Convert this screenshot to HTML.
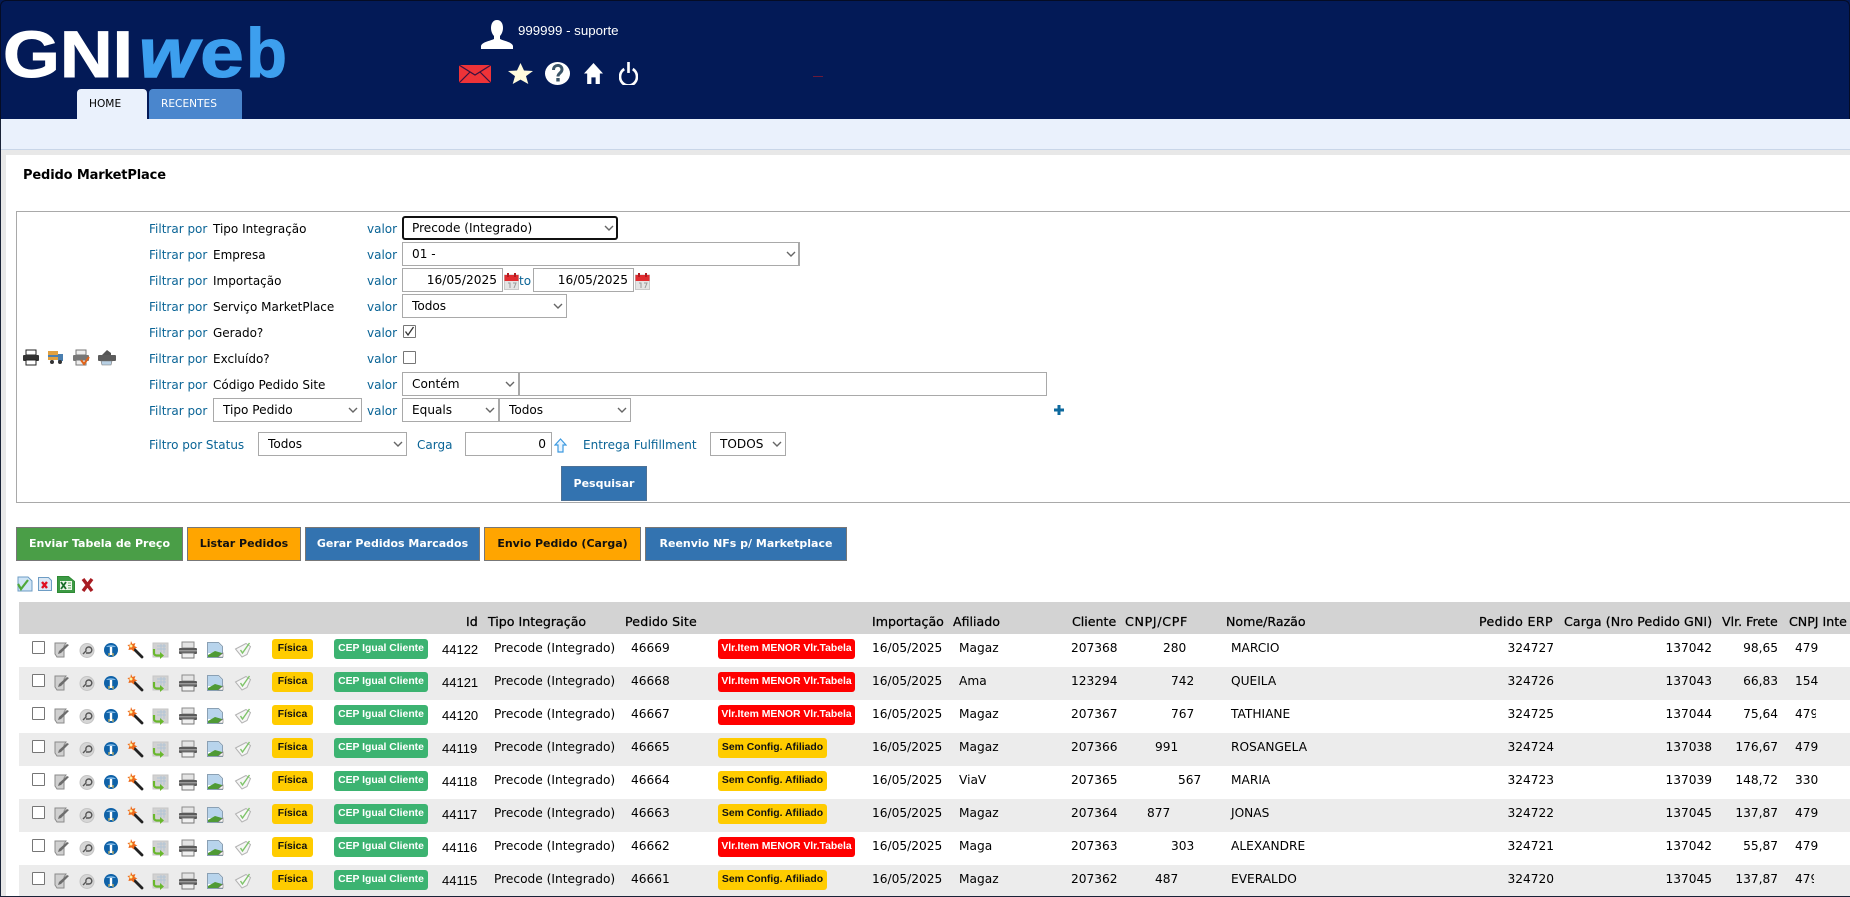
<!DOCTYPE html>
<html lang="pt-BR"><head><meta charset="utf-8"><title>Pedido MarketPlace</title>
<style>
html,body{margin:0;padding:0;width:1850px;height:897px;overflow:hidden;background:#fff}
*{box-sizing:border-box}
body{position:relative;font:12px/16px "DejaVu Sans","Liberation Sans",sans-serif;color:#000}
.a,.t,.l,.k,select,input,.b,.row,.c{position:absolute}
.t,.l,.k{white-space:nowrap;height:16px}
.l{color:#0a6496}
select,input[type=text]{appearance:none;-webkit-appearance:none;background:#fff;border:1px solid #a9a9a9;border-radius:0;font:12.1px "DejaVu Sans",sans-serif;color:#000;height:24px;padding:0 0 0 9px;margin:0;outline:0}
input.r{text-align:right;padding:0 5px 0 0;font-size:12.2px}
input[type=checkbox]{appearance:none;-webkit-appearance:none;background:#fff;border:1px solid #767676;border-radius:1px}
.chev{position:absolute;width:10px;height:6px;fill:none;stroke:#666;stroke-width:1.4}
.b{top:527px;height:34px;border:1px solid #777;font:bold 11px/32px "DejaVu Sans",sans-serif;text-align:center;white-space:nowrap;padding:0}
.g{background:#4a9e47;color:#fff}.o{background:#ffa500;color:#111}.bl{background:#3373b0;color:#fff}
.h{top:614px;font-size:12.6px;color:#000;-webkit-text-stroke:.25px #000}
.row{left:0;width:1850px;height:33px;font-size:12.2px}
.even{background:linear-gradient(90deg,transparent 19px,#ececec 19px)}
.row input{position:absolute;left:32px;top:7px;margin:0;width:13px;height:13px}
.ri{position:absolute;left:50px;top:6px;width:210px;height:20px}
.c{top:6px;white-space:nowrap;height:16px}
.c.n{font:13px/16px "Liberation Sans",sans-serif;left:442px;top:8px;color:#000}
.bd{position:absolute;top:5px;height:20px;border-radius:3px;font:bold 10.4px/20px "Liberation Sans",sans-serif;text-align:center;white-space:nowrap}
.fi{left:272px;width:41px;background:#ffcc00;color:#111}
.ce{left:334px;width:94px;background:#3cb371;color:#fff}
.vr{left:718px;width:137px;background:#f00;color:#fff}
.se{left:718px;width:109px;background:#ffcc00;color:#111}
.r2{text-align:right}
</style></head><body>

<svg width="0" height="0" style="position:absolute">
<symbol id="cal" viewBox="0 0 15 17">
<rect x="0.5" y="2" width="14" height="14.5" fill="#e4e4e4" stroke="#c8c8c8"/><rect x="0.5" y="2" width="14" height="6" fill="#e02c30"/><rect x="3" y="0" width="2" height="4" fill="#b01c20"/><rect x="10" y="0" width="2" height="4" fill="#b01c20"/><path d="M4 10h2v5M9 10h3l-2 5" stroke="#999" fill="none"/>
</symbol>
<symbol id="ri" viewBox="0 0 210 20">
<!-- edit -->
<path d="M5 3h11l-2 3v11H7L5 14z" fill="#d0d0d0" stroke="#8a8a8a"/><path d="M9 11l8-7 2 1-8 8-3 1z" fill="#6d6d6d"/>
<!-- circle -->
<circle cx="37" cy="10.500" r="7" fill="#d6d6d6" stroke="#c4c4c4"/><path d="M33 14l3-3a3 3 0 1 1 3 2h-3" fill="none" stroke="#555" stroke-width="1.400"/>
<!-- info -->
<circle cx="61" cy="10" r="7" fill="#0f62a8"/><path d="M56 7a6 4 0 0 1 10 0" fill="#7fb8e6"/><path d="M61 7v8" stroke="#fff" stroke-width="2.400"/><path d="M59 13v3M63 13v3" stroke="#f2c24a" stroke-width="1"/>
<!-- wand -->
<path d="M83 8l9 9" stroke="#222" stroke-width="2.800" stroke-linecap="round"/><path d="M81 1l1.400 3 3-1-1 3 3 1.500-3 1-.5 3-2.500-2-3 .5 1-3-2-2 3-.5z" fill="#ee6a1a"/><circle cx="81" cy="6" r="1.500" fill="#fff3a0"/>
<!-- refresh -->
<rect x="103" y="3" width="15" height="14" fill="#d2d2d2" stroke="#c6c6c6"/><path d="M107 6h9M107 9h9M111 4v9M114 4v9" stroke="#b2c4d6"/><path d="M104 9v4a2.500 2.500 0 0 0 2.500 2.500h4" stroke="#69b82c" stroke-width="2.200" fill="none"/><path d="M110 12v7l4-3.500z" fill="#69b82c"/>
<!-- printer -->
<rect x="132" y="2" width="12" height="6" fill="#e4e4e4" stroke="#8c8c8c"/><rect x="129" y="8" width="18" height="6" rx="1" fill="#5a5a5a"/><rect x="132" y="13" width="12" height="5" fill="#f0f0f0" stroke="#777"/><rect x="129" y="10" width="18" height="1.500" fill="#9a9a9a"/>
<!-- image -->
<path d="M157.500 2.500h11l4 4v11h-15z" fill="#fff" stroke="#8aa0b4"/><path d="M158 3h10l4 4v6h-14z" fill="#b8d4ec"/><path d="M158 17v-2l7-4 7 2v4z" fill="#4f9a35"/><path d="M168 17l5-4v4z" fill="#fff" stroke="#777" stroke-width=".6"/>
<!-- check -->
<path d="M185.500 9L196 3.500l4.500 3-3.500 8-5 2.500z" fill="#f6f6f6" stroke="#b4b4b4"/><path d="M190.500 10l2 3 7-10" fill="none" stroke="#7fc46a" stroke-width="1.400"/>
</symbol>
</svg>

<!-- header -->
<div class="a" style="left:0;top:0;width:1850px;height:119px;background:#031a57"></div>
<div class="a" style="left:0;top:0;width:1850px;height:119px;border:1px solid #050c24;border-bottom:0;border-radius:6px 6px 0 0"></div>
<svg class="a" style="left:0;top:20px" width="300" height="65">
<text x="3" y="57" font-family="Liberation Sans" font-weight="bold" font-size="66" fill="#fff" stroke="#fff" stroke-width="1" textLength="130" lengthAdjust="spacingAndGlyphs">GNI</text>
<text x="139" y="57" font-family="Liberation Sans" font-style="italic" font-weight="bold" font-size="70" fill="#3d9fee" stroke="#3d9fee" stroke-width="1.500" textLength="59" lengthAdjust="spacingAndGlyphs">w</text>
<text x="200" y="57" font-family="Liberation Sans" font-weight="bold" font-size="70" fill="#3d9fee" stroke="#3d9fee" stroke-width="1" textLength="44" lengthAdjust="spacingAndGlyphs">e</text>
<text x="246" y="57" font-family="Liberation Sans" font-weight="bold" font-size="70" fill="#3d9fee" stroke="#3d9fee" stroke-width="1" textLength="41" lengthAdjust="spacingAndGlyphs">b</text>
</svg>
<div class="a" style="left:77px;top:89px;width:70px;height:30px;background:#eaf1fc;border-radius:4px 4px 0 0"></div>
<div class="t" style="left:89px;top:96px;font-size:10.6px;color:#000">HOME</div>
<div class="a" style="left:149px;top:89px;width:93px;height:30px;background:#4a86cd;border-radius:4px 4px 0 0"></div>
<div class="t" style="left:161px;top:96px;font-size:10.6px;color:#fff">RECENTES</div>

<svg class="a" style="left:481px;top:20px" width="32" height="29" viewBox="0 0 32 29"><path d="M16 0c4 0 6 3.500 6 8 0 4-2 7-3 8v3c4 2 12 3 13 7v3H0v-3c1-4 9-5 13-7v-3c-1-1-3-4-3-8 0-4.500 2-8 6-8z" fill="#fff"/></svg>
<div class="t" style="left:518px;top:23px;font:13.300px/16px 'Liberation Sans',sans-serif;color:#fff">999999 - suporte</div>
<svg class="a" style="left:459px;top:65px" width="32" height="18" viewBox="0 0 32 18"><rect width="32" height="18" fill="#ee3338"/><path d="M0 0l16 10L32 0M0 18l11-11M32 18L21 7" fill="none" stroke="#3a1240" stroke-width="1.200"/></svg>
<svg class="a" style="left:508px;top:63px" width="25" height="21" viewBox="0 0 25 24" preserveAspectRatio="none"><path d="M12.500 0l3.500 8.500 9 .7-7 5.800 2.300 9-7.800-5-7.800 5 2.300-9-7-5.800 9-.7z" fill="#fffbdc"/></svg>
<svg class="a" style="left:545px;top:62px" width="25" height="23" viewBox="0 0 25 23"><ellipse cx="12.500" cy="11.500" rx="12.500" ry="11.500" fill="#fff"/><path d="M8.500 8c0-6 8.500-6 8.500-.5 0 3.500-4 3.500-4 7" fill="none" stroke="#3b5568" stroke-width="3"/><rect x="11.300" y="16" width="3.400" height="3.500" fill="#3b5568"/></svg>
<svg class="a" style="left:584px;top:63px" width="19" height="21" viewBox="0 0 18 19" preserveAspectRatio="none"><path d="M9 0l9 9.500h-3V19h-4v-6H7v6H3V9.500H0z" fill="#fff"/></svg>
<svg class="a" style="left:619px;top:62px" width="19" height="23" viewBox="0 0 18 21" preserveAspectRatio="none"><path d="M5 6.500a8 8 0 1 0 8 0" fill="none" stroke="#fff" stroke-width="2.500"/><path d="M9 0v10" stroke="#fff" stroke-width="2.500"/></svg>
<div class="a" style="left:813px;top:76px;width:10px;height:1px;background:#6b1a3a"></div>

<!-- sub band -->
<div class="a" style="left:0;top:119px;width:1850px;height:31px;background:#eaf1fc;border-bottom:1px solid #c9d6e8"></div>
<div class="a" style="left:0;top:150px;width:1850px;height:5px;background:#e8e8e8"></div>
<div class="a" style="left:0;top:150px;width:6px;height:747px;background:#e8e8e8"></div>

<div class="t" style="left:23px;top:168px;font:bold 13px/16px 'DejaVu Sans',sans-serif;color:#000;letter-spacing:-.15px">Pedido MarketPlace</div>

<!-- filter box -->
<div class="a" style="left:16px;top:211px;width:1840px;height:292px;border:1px solid #a9a9a9"></div>

<svg class="a" style="left:23px;top:349px" width="94" height="17" viewBox="0 0 94 17">
<rect x="3" y="1" width="10" height="5" fill="#fff" stroke="#222"/><rect x="0" y="6" width="16" height="6" rx="1" fill="#333"/><rect x="3" y="11" width="10" height="5" fill="#fff" stroke="#222"/>
<rect x="25" y="2" width="10" height="9" fill="#e0a040"/><rect x="25" y="6" width="10" height="2" fill="#4a7fb0"/><rect x="35" y="5" width="5" height="7" fill="#4a7fb0"/><circle cx="29" cy="13" r="2" fill="#333"/><circle cx="37" cy="13" r="2" fill="#333"/>
<rect x="53" y="1" width="10" height="5" fill="#eee" stroke="#777"/><rect x="50" y="6" width="16" height="6" rx="1" fill="#777"/><rect x="53" y="11" width="10" height="5" fill="#eee" stroke="#777"/><path d="M58 11l3 4 5-7" fill="none" stroke="#e0641a" stroke-width="2"/>
<path d="M78 7l6-6 4 3v3z" fill="#555"/><rect x="75" y="6" width="18" height="6" rx="1" fill="#5c5c5c"/><path d="M78 12h11l-1 4H79z" fill="#b8d0e4" stroke="#777" stroke-width=".6"/>
</svg>

<div class="l" style="left:149px;top:221px">Filtrar por</div><div class="t" style="left:213px;top:221px">Tipo Integração</div><div class="l" style="left:367px;top:221px">valor</div>
<select style="left:402px;top:216px;width:216px;border:2px solid #111;border-radius:3px;padding-left:8px"><option>Precode (Integrado)</option></select>
<svg class="chev" style="left:604px;top:225px"><path d="M1 1l4 4 4-4"/></svg>

<div class="l" style="left:149px;top:247px">Filtrar por</div><div class="t" style="left:213px;top:247px">Empresa</div><div class="l" style="left:367px;top:247px">valor</div>
<select style="left:402px;top:242px;width:398px;border-right-width:2px"><option>01 -</option></select>
<svg class="chev" style="left:786px;top:251px"><path d="M1 1l4 4 4-4"/></svg>

<div class="l" style="left:149px;top:273px">Filtrar por</div><div class="t" style="left:213px;top:273px">Importação</div><div class="l" style="left:367px;top:273px">valor</div>
<input class="r" type="text" value="16/05/2025" style="left:402px;top:268px;width:101px">
<svg class="a" style="left:504px;top:273px" width="15" height="17"><use href="#cal"/></svg>
<div class="l" style="left:519px;top:273px">to</div>
<input class="r" type="text" value="16/05/2025" style="left:533px;top:268px;width:101px">
<svg class="a" style="left:635px;top:273px" width="15" height="17"><use href="#cal"/></svg>

<div class="l" style="left:149px;top:299px">Filtrar por</div><div class="t" style="left:213px;top:299px">Serviço MarketPlace</div><div class="l" style="left:367px;top:299px">valor</div>
<select style="left:402px;top:294px;width:165px"><option>Todos</option></select>
<svg class="chev" style="left:553px;top:303px"><path d="M1 1l4 4 4-4"/></svg>

<div class="l" style="left:149px;top:325px">Filtrar por</div><div class="t" style="left:213px;top:325px">Gerado?</div><div class="l" style="left:367px;top:325px">valor</div>
<input type="checkbox" checked style="position:absolute;left:403px;top:325px;margin:0;width:13px;height:13px">
<svg class="a" style="left:403px;top:325px" width="13" height="13"><path d="M2.500 6.500l2.500 3.500 5.500-8" fill="none" stroke="#333" stroke-width="1.300"/></svg>

<div class="l" style="left:149px;top:351px">Filtrar por</div><div class="t" style="left:213px;top:351px">Excluído?</div><div class="l" style="left:367px;top:351px">valor</div>
<input type="checkbox" style="position:absolute;left:403px;top:351px;margin:0;width:13px;height:13px">

<div class="l" style="left:149px;top:377px">Filtrar por</div><div class="t" style="left:213px;top:377px">Código Pedido Site</div><div class="l" style="left:367px;top:377px">valor</div>
<select style="left:402px;top:372px;width:117px"><option>Contém</option></select>
<svg class="chev" style="left:505px;top:381px"><path d="M1 1l4 4 4-4"/></svg>
<input type="text" value="" style="left:519px;top:372px;width:528px">

<div class="l" style="left:149px;top:403px">Filtrar por</div>
<select style="left:213px;top:398px;width:149px"><option>Tipo Pedido</option></select>
<svg class="chev" style="left:348px;top:407px"><path d="M1 1l4 4 4-4"/></svg>
<div class="l" style="left:367px;top:403px">valor</div>
<select style="left:402px;top:398px;width:97px"><option>Equals</option></select>
<svg class="chev" style="left:485px;top:407px"><path d="M1 1l4 4 4-4"/></svg>
<select style="left:499px;top:398px;width:132px"><option>Todos</option></select>
<svg class="chev" style="left:617px;top:407px"><path d="M1 1l4 4 4-4"/></svg>
<svg class="a" style="left:1054px;top:405px" width="10" height="10"><path d="M5 0v10M0 5h10" stroke="#0e6a9e" stroke-width="3"/></svg>

<div class="l" style="left:149px;top:437px">Filtro por Status</div>
<select style="left:258px;top:432px;width:149px"><option>Todos</option></select>
<svg class="chev" style="left:393px;top:441px"><path d="M1 1l4 4 4-4"/></svg>
<div class="l" style="left:417px;top:437px">Carga</div>
<input class="r" type="text" value="0" style="left:465px;top:432px;width:87px">
<svg class="a" style="left:554px;top:438px" width="13" height="15" viewBox="0 0 13 15"><path d="M6.500 1L12 7H9v7H4V7H1z" fill="#eaf5ff" stroke="#3d9ae0" stroke-width="1.200"/></svg>
<div class="l" style="left:583px;top:437px">Entrega Fulfillment</div>
<select style="left:710px;top:432px;width:76px"><option>TODOS</option></select>
<svg class="chev" style="left:772px;top:441px"><path d="M1 1l4 4 4-4"/></svg>

<button class="b bl" style="left:561px;top:466px;width:86px;height:35px;border-color:#4d7196">Pesquisar</button>

<!-- action buttons -->
<button class="b g" style="left:16px;width:167px">Enviar Tabela de Preço</button>
<button class="b o" style="left:187px;width:114px">Listar Pedidos</button>
<button class="b bl" style="left:305px;width:175px">Gerar Pedidos Marcados</button>
<button class="b o" style="left:484px;width:157px">Envio Pedido (Carga)</button>
<button class="b bl" style="left:645px;width:202px">Reenvio NFs p/ Marketplace</button>

<svg class="a" style="left:17px;top:575px" width="78" height="19" viewBox="0 0 78 19">
<path d="M1 2h10l4 4v10H1z" fill="#cfe4f6" stroke="#6d9cc4"/><path d="M1 9l3 5 7-9" fill="none" stroke="#4fa83a" stroke-width="2.200"/>
<path d="M21.500 2.500h10l3 3v10h-13z" fill="#dce8f4" stroke="#6d9cc4"/><path d="M25 7l5 6M30 7l-5 6" stroke="#e01020" stroke-width="2.400"/>
<path d="M40.500 1.500h11l6 5v11h-17z" fill="#3c9a44" stroke="#2e8a34"/><rect x="43" y="6" width="12" height="9" fill="#eef6ea"/><path d="M44 7l5 7M49 7l-5 7" stroke="#1a6e2a" stroke-width="1.800"/><path d="M51 8h3M51 10.500h3M51 13h3" stroke="#6aa86a"/>
<path d="M66 4l9 12M75 4l-9 12" stroke="#a81c22" stroke-width="3.400"/>
</svg>

<!-- table header -->
<div class="a" style="left:19px;top:602px;width:1831px;height:32px;background:#d3d3d3"></div>
<div class="t h" style="left:466px">Id</div>
<div class="t h" style="left:488px">Tipo Integração</div>
<div class="t h" style="left:625px;letter-spacing:.15px">Pedido Site</div>
<div class="t h" style="left:872px">Importação</div>
<div class="t h" style="left:953px">Afiliado</div>
<div class="t h" style="left:1072px">Cliente</div>
<div class="t h" style="left:1125px;letter-spacing:.7px">CNPJ/CPF</div>
<div class="t h" style="left:1226px">Nome/Razão</div>
<div class="t h" style="left:1479px;letter-spacing:.35px">Pedido ERP</div>
<div class="t h" style="left:1564px;letter-spacing:.1px">Carga (Nro Pedido GNI)</div>
<div class="t h" style="left:1722px">Vlr. Frete</div>
<div class="t h" style="left:1789px">CNPJ Inte</div>

<!-- rows -->
<div class="row" style="top:634px"><input type="checkbox"><svg class="ri"><use href="#ri"/></svg><span class="bd fi">Física</span><span class="bd ce">CEP Igual Cliente</span><span class="c n">44122</span><span class="c" style="left:494px">Precode (Integrado)</span><span class="c" style="left:631px">46669</span><span class="bd vr">Vlr.Item MENOR Vlr.Tabela</span><span class="c" style="left:872px">16/05/2025</span><span class="c" style="left:959px">Magaz</span><span class="c" style="left:1071px">207368</span><span class="c" style="left:1163px">280</span><span class="c" style="left:1231px">MARCIO</span><span class="c r2" style="right:296px">324727</span><span class="c r2" style="right:138px">137042</span><span class="c r2" style="right:72px">98,65</span><span class="c" style="left:1795px">479</span></div>

<div class="row even" style="top:667px"><input type="checkbox"><svg class="ri"><use href="#ri"/></svg><span class="bd fi">Física</span><span class="bd ce">CEP Igual Cliente</span><span class="c n">44121</span><span class="c" style="left:494px">Precode (Integrado)</span><span class="c" style="left:631px">46668</span><span class="bd vr">Vlr.Item MENOR Vlr.Tabela</span><span class="c" style="left:872px">16/05/2025</span><span class="c" style="left:959px">Ama</span><span class="c" style="left:1071px">123294</span><span class="c" style="left:1171px">742</span><span class="c" style="left:1231px">QUEILA</span><span class="c r2" style="right:296px">324726</span><span class="c r2" style="right:138px">137043</span><span class="c r2" style="right:72px">66,83</span><span class="c" style="left:1795px">154</span></div>

<div class="row" style="top:700px"><input type="checkbox"><svg class="ri"><use href="#ri"/></svg><span class="bd fi">Física</span><span class="bd ce">CEP Igual Cliente</span><span class="c n">44120</span><span class="c" style="left:494px">Precode (Integrado)</span><span class="c" style="left:631px">46667</span><span class="bd vr">Vlr.Item MENOR Vlr.Tabela</span><span class="c" style="left:872px">16/05/2025</span><span class="c" style="left:959px">Magaz</span><span class="c" style="left:1071px">207367</span><span class="c" style="left:1171px">767</span><span class="c" style="left:1231px">TATHIANE</span><span class="c r2" style="right:296px">324725</span><span class="c r2" style="right:138px">137044</span><span class="c r2" style="right:72px">75,64</span><span class="c" style="left:1795px;width:21px;overflow:hidden">479</span></div>

<div class="row even" style="top:733px"><input type="checkbox"><svg class="ri"><use href="#ri"/></svg><span class="bd fi">Física</span><span class="bd ce">CEP Igual Cliente</span><span class="c n">44119</span><span class="c" style="left:494px">Precode (Integrado)</span><span class="c" style="left:631px">46665</span><span class="bd se">Sem Config. Afiliado</span><span class="c" style="left:872px">16/05/2025</span><span class="c" style="left:959px">Magaz</span><span class="c" style="left:1071px">207366</span><span class="c" style="left:1155px">991</span><span class="c" style="left:1231px">ROSANGELA</span><span class="c r2" style="right:296px">324724</span><span class="c r2" style="right:138px">137038</span><span class="c r2" style="right:72px">176,67</span><span class="c" style="left:1795px">479</span></div>

<div class="row" style="top:766px"><input type="checkbox"><svg class="ri"><use href="#ri"/></svg><span class="bd fi">Física</span><span class="bd ce">CEP Igual Cliente</span><span class="c n">44118</span><span class="c" style="left:494px">Precode (Integrado)</span><span class="c" style="left:631px">46664</span><span class="bd se">Sem Config. Afiliado</span><span class="c" style="left:872px">16/05/2025</span><span class="c" style="left:959px">ViaV</span><span class="c" style="left:1071px">207365</span><span class="c" style="left:1178px">567</span><span class="c" style="left:1231px">MARIA</span><span class="c r2" style="right:296px">324723</span><span class="c r2" style="right:138px">137039</span><span class="c r2" style="right:72px">148,72</span><span class="c" style="left:1795px">330</span></div>

<div class="row even" style="top:799px"><input type="checkbox"><svg class="ri"><use href="#ri"/></svg><span class="bd fi">Física</span><span class="bd ce">CEP Igual Cliente</span><span class="c n">44117</span><span class="c" style="left:494px">Precode (Integrado)</span><span class="c" style="left:631px">46663</span><span class="bd se">Sem Config. Afiliado</span><span class="c" style="left:872px">16/05/2025</span><span class="c" style="left:959px">Magaz</span><span class="c" style="left:1071px">207364</span><span class="c" style="left:1147px">877</span><span class="c" style="left:1231px">JONAS</span><span class="c r2" style="right:296px">324722</span><span class="c r2" style="right:138px">137045</span><span class="c r2" style="right:72px">137,87</span><span class="c" style="left:1795px">479</span></div>

<div class="row" style="top:832px"><input type="checkbox"><svg class="ri"><use href="#ri"/></svg><span class="bd fi">Física</span><span class="bd ce">CEP Igual Cliente</span><span class="c n">44116</span><span class="c" style="left:494px">Precode (Integrado)</span><span class="c" style="left:631px">46662</span><span class="bd vr">Vlr.Item MENOR Vlr.Tabela</span><span class="c" style="left:872px">16/05/2025</span><span class="c" style="left:959px">Maga</span><span class="c" style="left:1071px">207363</span><span class="c" style="left:1171px">303</span><span class="c" style="left:1231px">ALEXANDRE</span><span class="c r2" style="right:296px">324721</span><span class="c r2" style="right:138px">137042</span><span class="c r2" style="right:72px">55,87</span><span class="c" style="left:1795px">479</span></div>

<div class="row even" style="top:865px"><input type="checkbox"><svg class="ri"><use href="#ri"/></svg><span class="bd fi">Física</span><span class="bd ce">CEP Igual Cliente</span><span class="c n">44115</span><span class="c" style="left:494px">Precode (Integrado)</span><span class="c" style="left:631px">46661</span><span class="bd se">Sem Config. Afiliado</span><span class="c" style="left:872px">16/05/2025</span><span class="c" style="left:959px">Magaz</span><span class="c" style="left:1071px">207362</span><span class="c" style="left:1155px">487</span><span class="c" style="left:1231px">EVERALDO</span><span class="c r2" style="right:296px">324720</span><span class="c r2" style="right:138px">137045</span><span class="c r2" style="right:72px">137,87</span><span class="c" style="left:1795px;width:19px;overflow:hidden">479</span></div>

<div class="a" style="left:0;top:896px;width:1850px;height:1px;background:#1a2338"></div>
<div class="a" style="left:0;top:119px;width:1px;height:778px;background:#1a2338"></div>
</body></html>
